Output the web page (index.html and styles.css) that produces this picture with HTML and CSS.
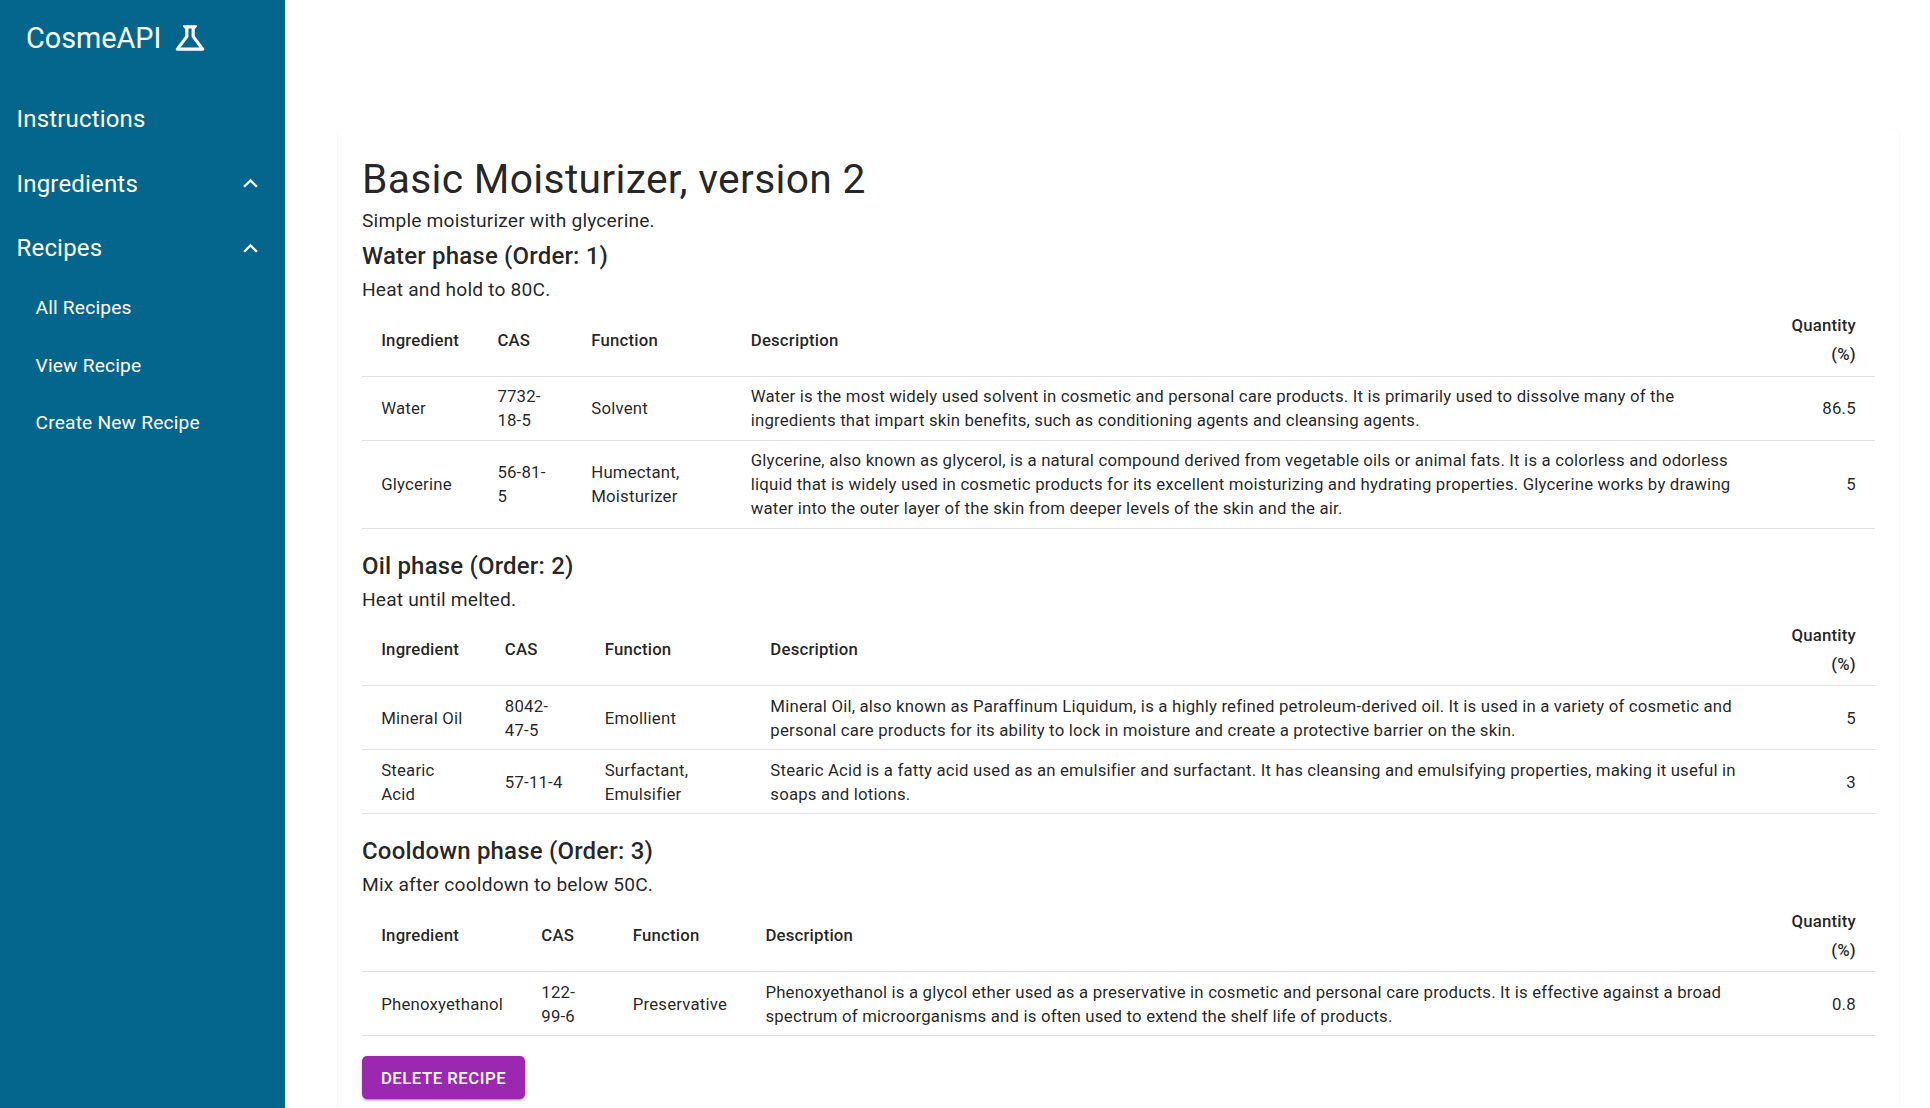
FILE: index.html
```html
<!DOCTYPE html>
<html lang="en">
<head>
  <meta charset="UTF-8" />
  <title>CosmeAPI</title>
  <link rel="stylesheet" href="styles.css">
</head>
<body>
  <nav class="sidebar">
    <div class="brand">
      <span>CosmeAPI</span>
      <svg class="flask" viewBox="0 0 24 24"><path d="M13 11.33 18 18H6l5-6.67V6h2m2.96-2H8.04c-.42 0-.65.48-.39.81L9 6.5v4.17L3.2 18.4c-.49.66-.02 1.6.8 1.6h16c.82 0 1.29-.94.8-1.6L15 10.67V6.5l1.35-1.69c.26-.33.03-.81-.39-.81z"/></svg>
    </div>
    <div class="nav-list">
      <a class="nav-item">Instructions</a>
      <a class="nav-item">Ingredients
        <svg class="chevron" viewBox="0 0 24 24"><path d="m12 8-6 6 1.41 1.41L12 10.83l4.59 4.58L18 14z"/></svg>
      </a>
      <a class="nav-item">Recipes
        <svg class="chevron" viewBox="0 0 24 24"><path d="m12 8-6 6 1.41 1.41L12 10.83l4.59 4.58L18 14z"/></svg>
      </a>
    </div>
    <div class="sub-list">
      <a class="sub-item">All Recipes</a>
      <a class="sub-item">View Recipe</a>
      <a class="sub-item">Create New Recipe</a>
    </div>
  </nav>

  <main class="content">
    <div class="card">
      <h1>Basic Moisturizer, version 2</h1>
      <p class="text">Simple moisturizer with glycerine.</p>

      <h2>Water phase (Order: 1)</h2>
      <p class="text">Heat and hold to 80C.</p>
      <table>
        <thead>
          <tr><th>Ingredient</th><th>CAS</th><th>Function</th><th>Description</th><th class="num">Quantity (%)</th></tr>
        </thead>
        <tbody>
          <tr>
            <td>Water</td><td>7732-18-5</td><td>Solvent</td>
            <td>Water is the most widely used solvent in cosmetic and personal care products. It is primarily used to dissolve many of the ingredients that impart skin benefits, such as conditioning agents and cleansing agents.</td>
            <td class="num">86.5</td>
          </tr>
          <tr>
            <td>Glycerine</td><td>56-81-5</td><td>Humectant, Moisturizer</td>
            <td>Glycerine, also known as glycerol, is a natural compound derived from vegetable oils or animal fats. It is a colorless and odorless liquid that is widely used in cosmetic products for its excellent moisturizing and hydrating properties. Glycerine works by drawing water into the outer layer of the skin from deeper levels of the skin and the air.</td>
            <td class="num">5</td>
          </tr>
        </tbody>
      </table>

      <h2>Oil phase (Order: 2)</h2>
      <p class="text">Heat until melted.</p>
      <table>
        <thead>
          <tr><th>Ingredient</th><th>CAS</th><th>Function</th><th>Description</th><th class="num">Quantity (%)</th></tr>
        </thead>
        <tbody>
          <tr>
            <td>Mineral Oil</td><td>8042-47-5</td><td>Emollient</td>
            <td>Mineral Oil, also known as Paraffinum Liquidum, is a highly refined petroleum-derived oil. It is used in a variety of cosmetic and personal care products for its ability to lock in moisture and create a protective barrier on the skin.</td>
            <td class="num">5</td>
          </tr>
          <tr>
            <td>Stearic Acid</td><td>57-11-4</td><td>Surfactant, Emulsifier</td>
            <td>Stearic Acid is a fatty acid used as an emulsifier and surfactant. It has cleansing and emulsifying properties, making it useful in soaps and lotions.</td>
            <td class="num">3</td>
          </tr>
        </tbody>
      </table>

      <h2>Cooldown phase (Order: 3)</h2>
      <p class="text">Mix after cooldown to below 50C.</p>
      <table>
        <thead>
          <tr><th>Ingredient</th><th>CAS</th><th>Function</th><th>Description</th><th class="num">Quantity (%)</th></tr>
        </thead>
        <tbody>
          <tr>
            <td>Phenoxyethanol</td><td>122-99-6</td><td>Preservative</td>
            <td>Phenoxyethanol is a glycol ether used as a preservative in cosmetic and personal care products. It is effective against a broad spectrum of microorganisms and is often used to extend the shelf life of products.</td>
            <td class="num">0.8</td>
          </tr>
        </tbody>
      </table>

      <button class="delete-btn">Delete Recipe</button>
    </div>
  </main>
</body>
</html>
```

FILE: styles.css
```css
html, body {
  height: 100%;
  overflow: hidden;
}
body {
  margin: 0;
  display: flex;
  font-family: Roboto, sans-serif;
  color: rgba(0,0,0,0.87);
  background: white;
}
.sidebar {
  width: 285px;
  flex-shrink: 0;
  background: #05668d;
  color: white;
}
.brand {
  display: flex;
  align-items: center;
  height: 75px;
  padding-left: 26px;
  font-size: 28.8px;
}
.flask {
  width: 38px;
  height: 38px;
  margin-left: 10px;
  fill: white;
}
.nav-list {
  margin-top: 12px;
}
.nav-item {
  display: flex;
  align-items: center;
  justify-content: space-between;
  height: 64.5px;
  padding: 0 20.5px 0 16.5px;
  font-size: 24px;
  letter-spacing: 0.0075em;
}
.chevron {
  width: 29px;
  height: 29px;
  fill: white;
}
.sub-list {
  margin-top: -1.5px;
}
.sub-item {
  display: flex;
  align-items: center;
  height: 57.5px;
  padding-left: 35.5px;
  font-size: 19.2px;
  letter-spacing: 0.00938em;
}
.content {
  flex: 1;
  min-width: 0;
  padding: 130px 31px 0 53px;
}
.card {
  padding: 24px;
  border-radius: 5px;
  box-shadow: 0 1px 3px rgba(0,0,0,0.08);
}
h1 {
  margin: 0 0 3px;
  font-size: 40.8px;
  font-weight: 400;
  line-height: 50px;
  letter-spacing: 0.00735em;
}
h2 {
  margin: 0;
  font-size: 24px;
  font-weight: 500;
  line-height: 40px;
  letter-spacing: 0.0075em;
}
.text {
  margin: 0;
  font-size: 19.2px;
  line-height: 28.8px;
  letter-spacing: 0.00938em;
}
table {
  width: 100%;
  border-collapse: collapse;
  margin-bottom: 17px;
  font-size: 16.8px;
  letter-spacing: 0.01071em;
}
th, td {
  padding: 7.5px 19.2px;
  text-align: left;
  border-bottom: 1px solid #e0e0e0;
}
th {
  padding-top: 6.5px;
  padding-bottom: 6.5px;
  font-weight: 500;
  line-height: 29px;
}
td {
  line-height: 24px;
}
.num {
  text-align: right;
}
.delete-btn {
  display: block;
  width: 163px;
  height: 43px;
  margin-top: 20px;
  padding: 0;
  border: none;
  border-radius: 5px;
  background: #9c27b0;
  color: white;
  font-family: Roboto, sans-serif;
  font-size: 16.8px;
  font-weight: 500;
  letter-spacing: 0.02857em;
  text-transform: uppercase;
  box-shadow: 0 3px 1px -2px rgba(0,0,0,0.2), 0 2px 2px rgba(0,0,0,0.14), 0 1px 5px rgba(0,0,0,0.12);
}
```
